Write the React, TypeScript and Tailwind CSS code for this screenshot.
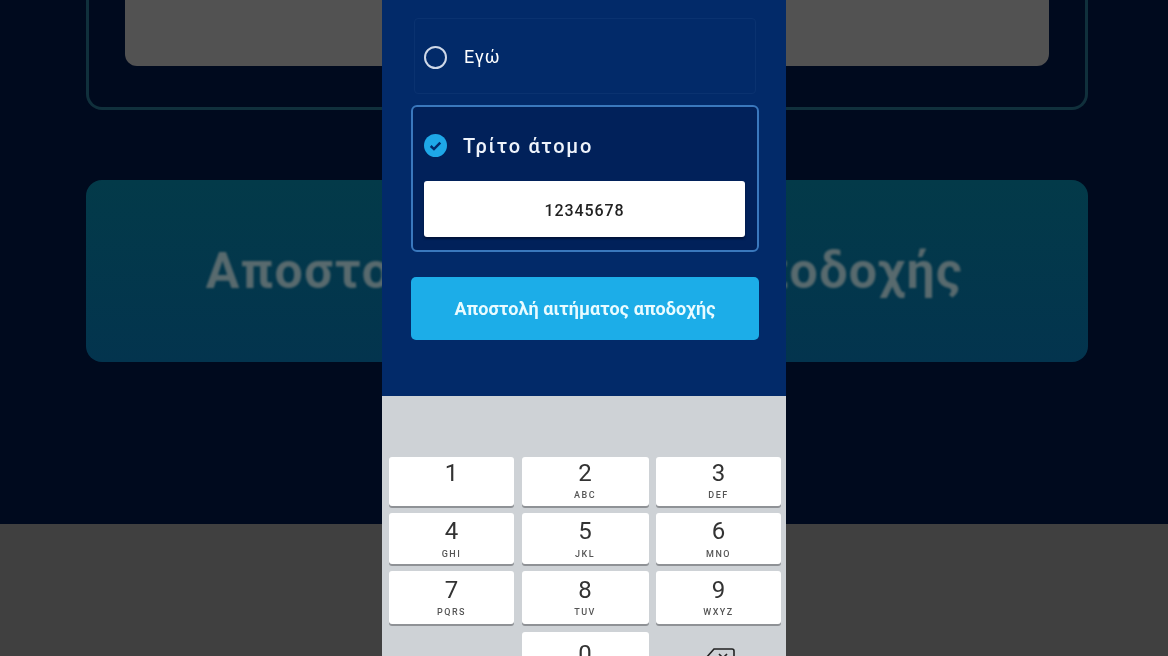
import React from "react";

const rows: { h: string; mt: string; pad: string; gap: string; items: [string, string][] }[] = [
  { h: "h-[49px]", mt: "mt-0", pad: "pt-[2px]", gap: "mt-[3px]", items: [["1", ""], ["2", "ABC"], ["3", "DEF"]] },
  { h: "h-[51px]", mt: "mt-[7px]", pad: "pt-[4px]", gap: "mt-[4px]", items: [["4", "GHI"], ["5", "JKL"], ["6", "MNO"]] },
  { h: "h-[53px]", mt: "mt-[7px]", pad: "pt-[5px]", gap: "mt-[3px]", items: [["7", "PQRS"], ["8", "TUV"], ["9", "WXYZ"]] },
];

function Key({ d, l, h, pad, gap }: { d: string; l: string; h: string; pad: string; gap: string }) {
  return (
    <div className={`${h} ${pad} flex flex-col items-center rounded-[3px] bg-white shadow-[0_2px_0_#8f9296]`}>
      <span className="text-[24px] leading-[28px] text-[#333] blur-[0.4px]">{d}</span>
      <span className={`${gap} text-[9px] font-medium leading-[11px] tracking-[1.5px] text-[#555] blur-[0.4px]`}>{l}</span>
    </div>
  );
}

export default function App() {
  return (
    <div className="relative h-[656px] w-[1168px] overflow-hidden bg-[#404040] font-['Roboto',sans-serif]">
      {/* Enlarged, darkened backdrop */}
      <div className="h-[524px] bg-[#000a1e] pl-[86px] pr-[80px]">
        <div className="h-[110px] rounded-b-[16px] border-x-[3px] border-b-[3px] border-[#10303c] px-[36px]">
          <div className="h-[66px] rounded-b-[12px] bg-[#525252]" />
        </div>
        <div className="mt-[70px] flex h-[182px] items-center justify-center rounded-[16px] bg-gradient-to-b from-[#033a49] to-[#03344e] pr-[5px]">
          <span className="whitespace-nowrap text-[50px] font-bold tracking-[1.4px] text-[#586a6e] blur-[0.8px]">Αποστολή αιτήματος αποδοχής</span>
        </div>
      </div>

      {/* Phone screen */}
      <div className="absolute inset-y-0 left-[382px] flex w-[404px] flex-col">
        <div className="flex h-[396px] shrink-0 flex-col bg-[#022a69] pl-[29px] pr-[27px] pt-[18px]">
          <div className="mx-[3px] flex h-[76px] items-center gap-[17px] rounded-[4px] border border-[#0a3270] pl-[9px] pt-[2px]">
            <span className="h-[23px] w-[23px] rounded-full border-2 border-[#cfd8e8] blur-[0.3px]" />
            <span className="text-[18px] leading-none tracking-[0.8px] text-white blur-[0.4px]">Εγώ</span>
          </div>

          <div className="mt-[11px] h-[147px] rounded-[6px] border-2 border-[#3a78bd] bg-[#01215a] px-[11px]">
            <div className="flex h-[74px] items-center gap-[16px] pt-[3px]">
              <svg width="23" height="23" viewBox="0 0 24 24" className="shrink-0">
                <circle cx="12" cy="12" r="12" fill="#1ea8e8" />
                <path d="M7 12.5l3.4 3.2L17 9" fill="none" stroke="#02296a" strokeWidth="2.6" />
              </svg>
              <span className="text-[20px] font-medium leading-none tracking-[1.7px] text-[#eef3fb] blur-[0.4px]">Τρίτο άτομο</span>
            </div>
            <div className="mr-[1px] flex h-[56px] items-center justify-center rounded-[3px] bg-white pt-[3px] shadow-[0_2px_2px_#00133a]">
              <span className="text-[16px] font-medium tracking-[0.9px] text-[#222] blur-[0.4px]">12345678</span>
            </div>
          </div>

          <button className="mt-[25px] flex h-[63px] items-center justify-center rounded-[5px] bg-[#1cade8]">
            <span className="text-[18px] font-bold tracking-[0.08px] text-[#e9fbff] blur-[0.4px]">Αποστολή αιτήματος αποδοχής</span>
          </button>
        </div>

        <div className="flex-1 bg-[#ced2d6] pl-[7px] pr-[5px] pt-[61px]">
          {rows.map((r) => (
            <div key={r.h} className={`${r.mt} grid grid-cols-[125px_127px_125px] gap-x-[7.5px] text-center`}>
              {r.items.map(([d, l]) => <Key key={d} d={d} l={l} h={r.h} pad={r.pad} gap={r.gap} />)}
            </div>
          ))}
          <div className="mt-[8px] grid grid-cols-[125px_127px_125px] gap-x-[7.5px] text-center">
            <div />
            <Key d="0" l="" h="h-[52px]" pad="pt-[8px]" gap="mt-0" />
            <div className="flex justify-center pt-[15px] pl-[2px]">
              <svg width="30" height="22" viewBox="0 0 30 22" fill="none" stroke="#222" strokeWidth="1.6">
                <path d="M9 2h18a2 2 0 0 1 2 2v14a2 2 0 0 1-2 2H9L1 11z" />
                <path d="M14 7l8 8M22 7l-8 8" />
              </svg>
            </div>
          </div>
        </div>
      </div>
    </div>
  );
}
